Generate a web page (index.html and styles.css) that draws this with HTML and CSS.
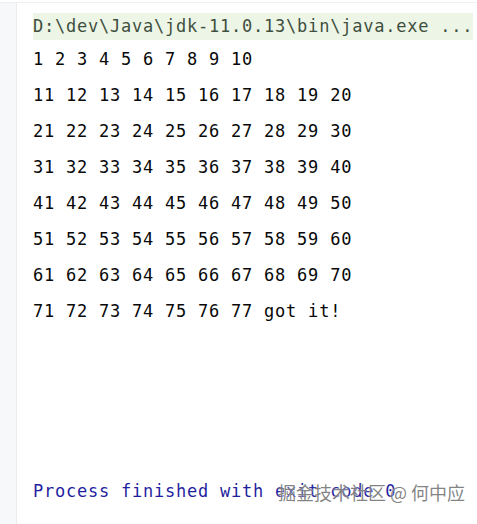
FILE: index.html
```html
<!DOCTYPE html>
<html>
<head>
<meta charset="utf-8">
<link rel="stylesheet" href="styles.css">
</head>
<body>
<div class="frame">
  <div class="gutter"></div>
  <div class="console">
    <div class="line cmd">D:\dev\Java\jdk-11.0.13\bin\java.exe ...</div>
    <div class="line">1 2 3 4 5 6 7 8 9 10</div>
    <div class="line">11 12 13 14 15 16 17 18 19 20</div>
    <div class="line">21 22 23 24 25 26 27 28 29 30</div>
    <div class="line">31 32 33 34 35 36 37 38 39 40</div>
    <div class="line">41 42 43 44 45 46 47 48 49 50</div>
    <div class="line">51 52 53 54 55 56 57 58 59 60</div>
    <div class="line">61 62 63 64 65 66 67 68 69 70</div>
    <div class="line">71 72 73 74 75 76 77 got it!</div>
    <div class="line"></div>
    <div class="line"></div>
    <div class="line"></div>
    <div class="line"></div>
    <div class="line exit">Process finished with exit code 0</div>
  </div>
  <div class="watermark">掘金技术社区 @ 何中应</div>
</div>
</body>
</html>
```
FILE: styles.css
```css
html, body {
  margin: 0;
  padding: 0;
  background: #ffffff;
}
.frame {
  position: relative;
  display: flex;
  width: 477px;
  height: 524px;
  overflow: hidden;
  border-top: 1px solid #eef0f2;
  margin-top: 2px;
  box-sizing: border-box;
}
.gutter {
  width: 16px;
  flex: 0 0 16px;
  background: #f7f8fa;
  border-right: 1px solid #ebecf0;
}
.console {
  flex: 1;
  padding-left: 16px;
  padding-top: 10px;
  font-family: "DejaVu Sans Mono", "Liberation Mono", monospace;
  font-size: 17px;
  letter-spacing: 0.77px;
  color: #080808;
}
.line {
  height: 36px;
  line-height: 36px;
  white-space: pre;
}
.line.cmd {
  height: 27px;
  line-height: 27px;
  margin-bottom: 1px;
  background: #edf6e6;
  color: #3f4f3f;
  margin-right: 4px;
}
.line.exit {
  color: #1f1fa0;
}
.watermark {
  position: absolute;
  left: 278px;
  top: 476px;
  font-family: "Noto Sans CJK SC", sans-serif;
  font-size: 18px;
  line-height: 26px;
  color: rgba(110, 110, 110, 0.85);
  text-shadow: 0 0 2px #ffffff;
  white-space: pre;
}
```
